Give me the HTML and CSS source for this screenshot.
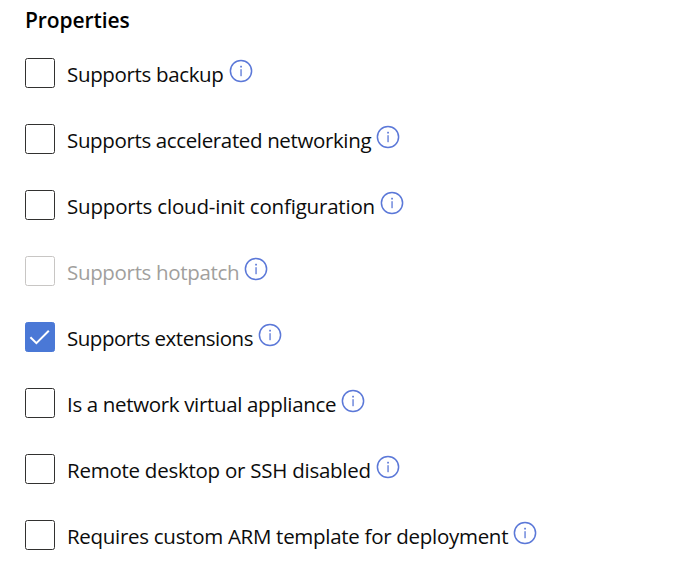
FILE: index.html
```html
<!DOCTYPE html>
<html lang="en">
<head>
<meta charset="utf-8">
<title>Properties</title>
<link rel="stylesheet" href="styles.css">
</head>
<body>
<svg class="defs" width="0" height="0"><symbol id="info" viewBox="0 0 24 24"><circle cx="12" cy="12" r="10.6" fill="none" stroke="currentColor" stroke-width="1.5"/><rect x="11.4" y="10.2" width="1.3" height="7" fill="currentColor"/><rect x="11.2" y="6.8" width="1.7" height="1.7" fill="currentColor"/></symbol></svg>
<main class="panel">
<h2 class="title">Properties</h2>
<ul class="list">
<li class="row"><span class="box"></span><span class="label backup">Supports backup</span><svg class="info"><use href="#info"/></svg></li>
<li class="row"><span class="box"></span><span class="label networking">Supports accelerated networking</span><svg class="info"><use href="#info"/></svg></li>
<li class="row"><span class="box"></span><span class="label cloud">Supports cloud-init configuration</span><svg class="info"><use href="#info"/></svg></li>
<li class="row disabled"><span class="box"></span><span class="label hotpatch">Supports hotpatch</span><svg class="info"><use href="#info"/></svg></li>
<li class="row checked"><span class="box"><svg class="tick" viewBox="0 0 30 30"><path d="M5.4 15.2 11.4 21.2 23.8 8.8"/></svg></span><span class="label extensions">Supports extensions</span><svg class="info"><use href="#info"/></svg></li>
<li class="row"><span class="box"></span><span class="label appliance">Is a network virtual appliance</span><svg class="info"><use href="#info"/></svg></li>
<li class="row"><span class="box"></span><span class="label remote">Remote desktop or SSH disabled</span><svg class="info"><use href="#info"/></svg></li>
<li class="row"><span class="box"></span><span class="label template">Requires custom ARM template for deployment</span><svg class="info"><use href="#info"/></svg></li>
</ul>
</main>
</body>
</html>
```
FILE: styles.css
```css
* { box-sizing: border-box; }
body { margin: 0; background: #fff; color: #0c0c0c; font-family: "Open Sans", "Noto Sans", sans-serif; }
.defs { position: absolute; }
.panel { padding: 5px 25px 0; }
.title { margin: 0; font-size: 21px; line-height: 30px; font-weight: 600; letter-spacing: -0.1px; color: #000; }
.list { list-style: none; margin: 23px 0 0; padding: 0; display: flex; flex-direction: column; gap: 36px; }
.row { display: flex; height: 30px; align-items: center; }
.box { width: 30px; height: 30px; border: 1px solid #323130; border-radius: 2.5px; margin-right: 12px; flex: none; }
.label { font-size: 20.5px; line-height: 30px; white-space: nowrap; padding-top: 2px; flex: none; }
.backup { letter-spacing: -0.34px; }
.networking { letter-spacing: -0.36px; }
.cloud { letter-spacing: -0.19px; }
.hotpatch { letter-spacing: -0.33px; }
.extensions { letter-spacing: -0.49px; }
.appliance { letter-spacing: -0.34px; }
.remote { letter-spacing: -0.25px; }
.template { letter-spacing: -0.29px; }
.info { width: 24px; height: 24px; color: #5b78d8; flex: none; margin: -4px 0 0 5px; }
.disabled .box { border-color: #c8c6c4; }
.disabled .label { color: #a19f9d; }
.checked .box { background: #4a78d6; border-color: #4a78d6; }
.tick { display: block; width: 30px; height: 30px; margin: -1px; fill: none; stroke: #fff; stroke-width: 2; }
```
